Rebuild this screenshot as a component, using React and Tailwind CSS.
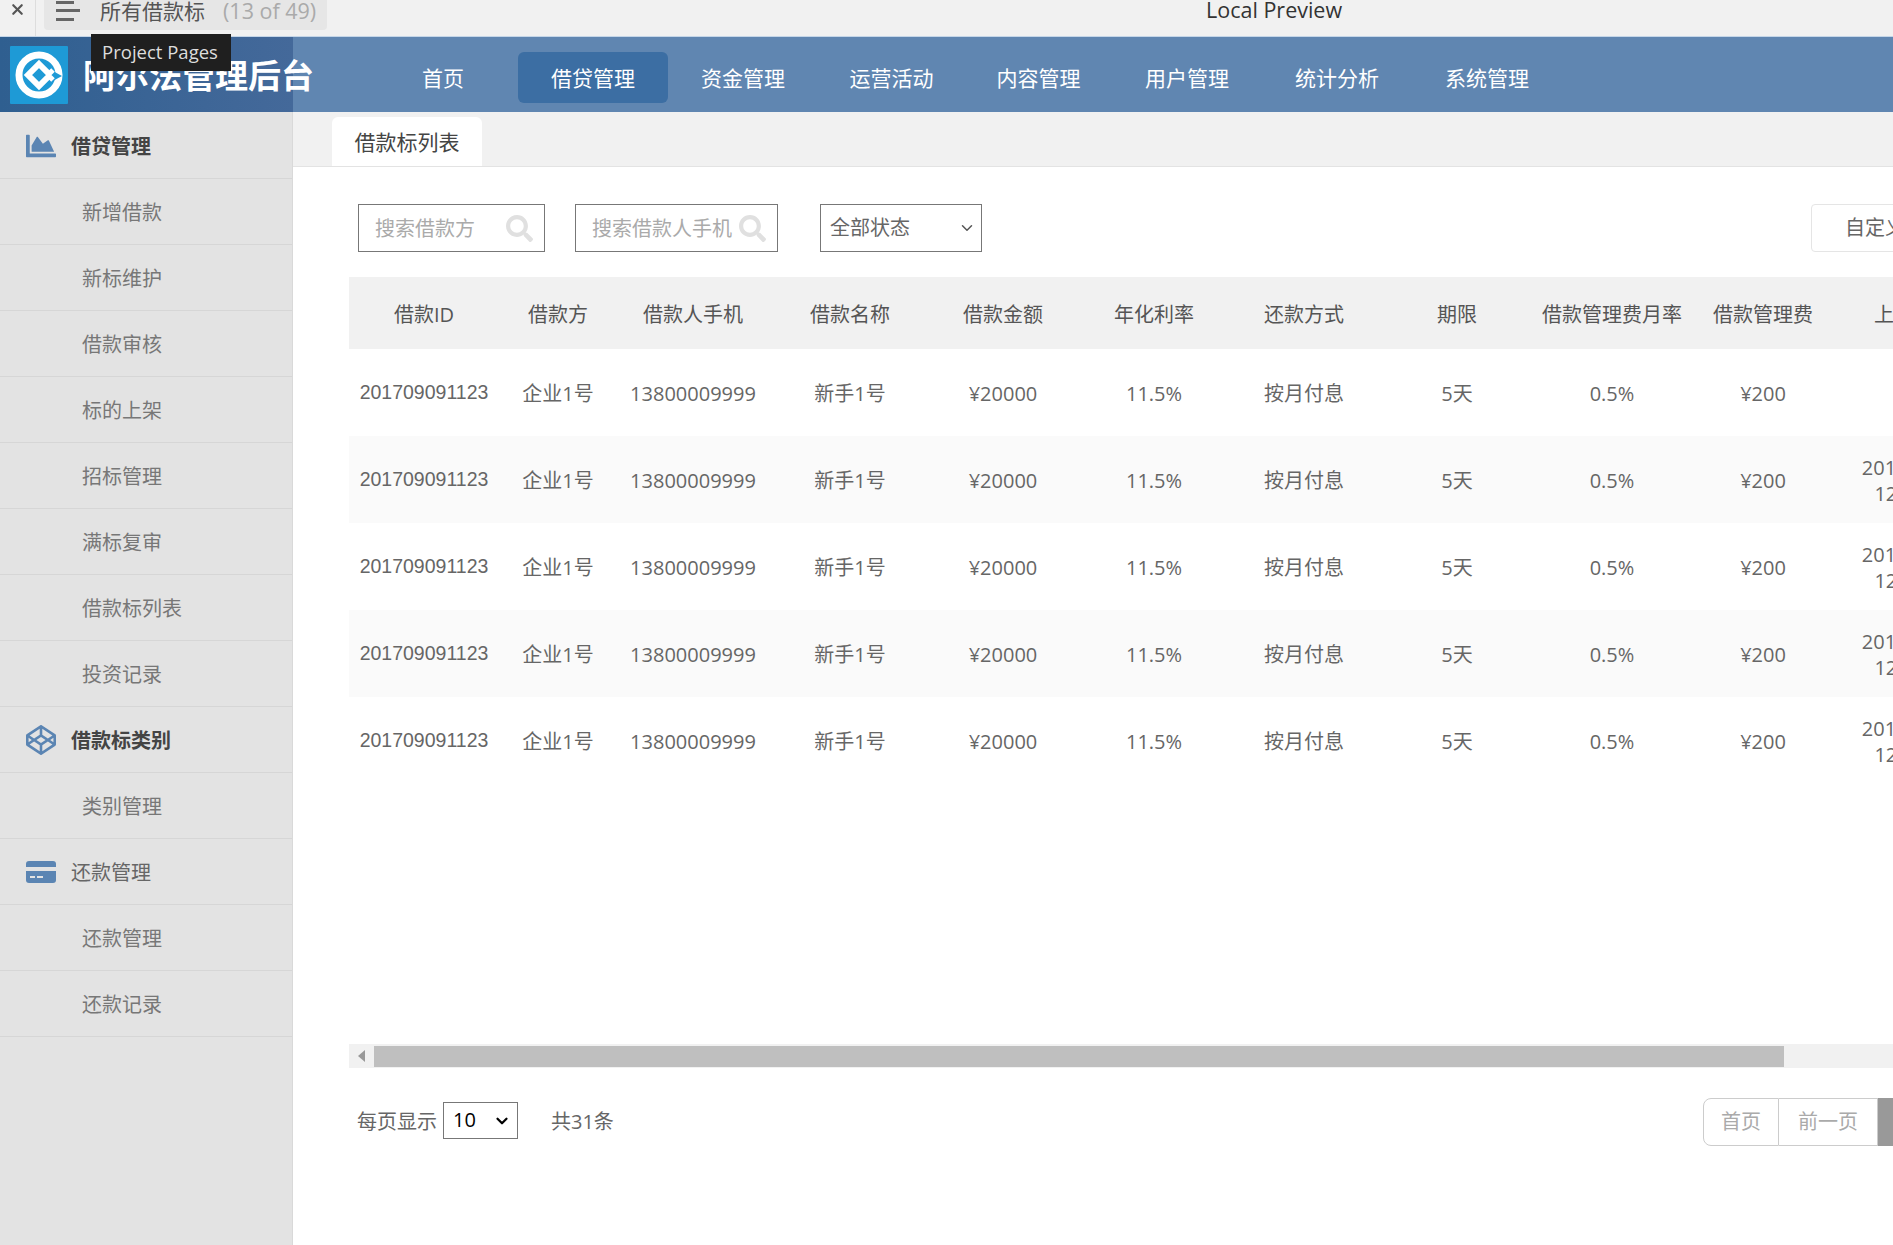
import React from 'react'
import { FaChartArea, FaCodepen, FaSearch } from 'react-icons/fa'
import { ChevronDown, X } from 'lucide-react'

const navItems = [
	{ label: '首页', width: 'w-[150px]' },
	{ label: '借贷管理', width: 'w-[150px]', active: true },
	{ label: '资金管理', width: 'w-[150px]' },
	{ label: '运营活动', width: 'w-[147px]' },
	{ label: '内容管理', width: 'w-[147px]' },
	{ label: '用户管理', width: 'w-[150px]' },
	{ label: '统计分析', width: 'w-[150px]' },
	{ label: '系统管理', width: 'w-[150px]' },
]

function CardIcon({ className }) {
	return (
		<svg viewBox="0 0 30 22" className={className}>
			<path d="M3 0h24a3 3 0 0 1 3 3v3H0V3a3 3 0 0 1 3-3z" fill="currentColor" />
			<path d="M0 10h30v9a3 3 0 0 1-3 3H3a3 3 0 0 1-3-3z" fill="currentColor" />
			<rect x="4" y="15" width="5" height="2" fill="#e3e3e3" />
			<rect x="11" y="15" width="6" height="2" fill="#e3e3e3" />
		</svg>
	)
}

const sideItems = [
	{ label: '借贷管理', icon: FaChartArea, bold: true },
	{ label: '新增借款' },
	{ label: '新标维护' },
	{ label: '借款审核' },
	{ label: '标的上架' },
	{ label: '招标管理' },
	{ label: '满标复审' },
	{ label: '借款标列表' },
	{ label: '投资记录' },
	{ label: '借款标类别', icon: FaCodepen, bold: true },
	{ label: '类别管理' },
	{ label: '还款管理', icon: CardIcon },
	{ label: '还款管理' },
	{ label: '还款记录' },
]

const columns = [
	{ label: '借款ID', width: 'w-[150px]' },
	{ label: '借款方', width: 'w-[118px]' },
	{ label: '借款人手机', width: 'w-[152px]' },
	{ label: '借款名称', width: 'w-[162px]' },
	{ label: '借款金额', width: 'w-[144px]' },
	{ label: '年化利率', width: 'w-[158px]' },
	{ label: '还款方式', width: 'w-[142px]' },
	{ label: '期限', width: 'w-[164px]' },
	{ label: '借款管理费月率', width: 'w-[146px]' },
	{ label: '借款管理费', width: 'w-[156px]' },
	{ label: '上架时间', width: 'w-[146px]' },
]

const rows = [
	{ date: false },
	{ date: true },
	{ date: true },
	{ date: true },
	{ date: true },
]

function Logo() {
	return (
		<svg viewBox="0 0 58 58" className="h-[58px] w-[58px] shrink-0">
			<rect width="58" height="58" rx="1" fill="#1e9ad6" />
			<circle cx="29" cy="29" r="20" fill="none" stroke="#fff" strokeWidth="7" />
			<path d="M29 16 L42 29 L29 42 L16 29 Z" fill="#1e9ad6" />
			<path d="M29 18 L40 29 L29 40 L18 29 Z" fill="none" stroke="#fff" strokeWidth="6" />
			<path d="M41 24 L52 30 L41 36 Z" fill="#1e9ad6" />
			<path d="M38 29 L43 24 M38 29 L43 34" stroke="#fff" strokeWidth="5" />
		</svg>
	)
}

function ListIcon() {
	return (
		<svg viewBox="0 0 24 22" className="h-[22px] w-6 shrink-0 text-[#666]">
			<rect y="0" width="18" height="3" fill="currentColor" />
			<rect y="8" width="24" height="3" fill="currentColor" />
			<rect y="17" width="18" height="3" fill="currentColor" />
		</svg>
	)
}

function SearchBox({ placeholder, className }) {
	return (
		<div className={`relative h-12 border border-[#777] ${className}`}>
			<input
				placeholder={placeholder}
				className="h-full w-full pl-4 text-[20px] outline-none placeholder:text-[#aaa]"
			/>
			<FaSearch className="absolute top-[10px] right-[11px] size-[27px] text-[#e0e0e0]" />
		</div>
	)
}

function App() {
	return (
		<div className="relative flex h-screen w-full flex-col overflow-hidden bg-white font-['Open_Sans','Noto_Sans_CJK_SC',sans-serif] text-[20px] text-[#666]">
			{/* preview window bar */}
			<div className="relative flex h-[37px] shrink-0 items-start border-b border-[#c5d6e8] bg-[#f1f1f1]">
				<div className="flex h-[36px] w-[36px] justify-center border-r border-[#ddd]">
					<X className="mt-[1px] size-[17px] text-[#555]" strokeWidth={3} />
				</div>
				<div className="ml-2 flex h-[30px] w-[283px] items-start rounded-b bg-[#e6e6e6] pl-[12px]">
					<div className="pt-[1px]">
						<ListIcon />
					</div>
					<span className="ml-[20px] text-[21px] leading-[22px] text-[#555]">所有借款标</span>
					<span className="ml-[18px] text-[21.5px] leading-[22px] text-[#aaa]">(13 of 49)</span>
				</div>
				<span className="absolute -top-[2px] left-[1206px] text-[21.5px] leading-[24px] text-[#333]">Local Preview</span>
			</div>

			{/* top nav */}
			<header className="flex h-[75px] shrink-0 items-center bg-[#6086b1]">
				<div className="flex h-full w-[293px] shrink-0 items-center bg-gradient-to-r from-[#2f5f90] to-[#44699a] pl-[10px]">
					<Logo />
					<span className="mt-[2px] ml-[15px] text-[33px] leading-[40px] font-bold whitespace-nowrap text-white">阿尔法管理后台</span>
				</div>
				<nav className="mt-[5px] ml-[75px] flex">
					{navItems.map((item) => (
						<a
							key={item.label}
							className={`flex h-[51px] items-center justify-center rounded-md pt-[3px] text-[21px] text-white ${item.width} ${item.active ? 'bg-[#3c6ea3]' : ''}`}
						>
							{item.label}
						</a>
					))}
				</nav>
			</header>

			<div className="flex min-h-0 flex-1">
				{/* sidebar */}
				<aside className="w-[293px] shrink-0 border-r border-[#d9d9d9] bg-[#e3e3e3] pt-[1px]">
					{sideItems.map((item) => {
						const Icon = item.icon
						return (
							<div
								key={item.label + (Icon ? '-head' : '')}
								className={`flex h-[66px] items-center border-b border-[#d6d6d6] ${Icon ? 'pl-[26px]' : 'pl-[82px]'}`}
							>
								{Icon ? <Icon className="mr-[15px] h-[30px] w-[30px] text-[#5b85b3]" /> : null}
								<span className={`pt-[3px] ${item.bold ? 'font-bold text-[#444]' : Icon ? 'text-[#666]' : 'text-[#777]'}`}>{item.label}</span>
							</div>
						)
					})}
				</aside>

				{/* content */}
				<main className="min-w-0 flex-1">
					<div className="flex h-[55px] items-end border-b border-[#e3e3e3] bg-[#f1f1f1] pl-[39px]">
						<div className="flex h-[49px] w-[150px] items-center justify-center rounded-t-md bg-white pt-[2px] text-[21px] text-[#444]">借款标列表</div>
					</div>

					<div className="flex h-[110px] items-start pt-[37px] pl-[65px]">
						<SearchBox placeholder="搜索借款方" className="w-[187px]" />
						<SearchBox placeholder="搜索借款人手机" className="ml-[30px] w-[203px]" />
						<div className="relative ml-[42px] h-12 w-[162px] border border-[#777]">
							<select className="h-full w-full appearance-none pl-[9px] text-[20px] text-[#666] outline-none">
								<option>全部状态</option>
							</select>
							<ChevronDown className="pointer-events-none absolute top-[14px] right-[5px] size-[18px] text-[#555]" />
						</div>
						<button className="ml-auto h-12 w-[120px] -mr-[38px] rounded border border-[#e5e5e5] pl-[33px] text-left whitespace-nowrap text-[#666]">自定义</button>
					</div>

					<div className="ml-[56px] overflow-hidden">
						<table className="w-[1638px] table-fixed border-collapse">
							<thead>
								<tr className="h-[72px] bg-[#f1f1f1]">
									{columns.map((col) => (
										<th key={col.label} className={`pt-[3px] font-normal text-[#555] ${col.width}`}>{col.label}</th>
									))}
								</tr>
							</thead>
							<tbody>
								{rows.map((row, index) => (
									<tr key={index} className={`h-[87px] text-center [&>td]:pt-[3px] ${index % 2 === 1 ? 'bg-[#fafafa]' : ''}`}>
										<td className="pb-[3px] font-['Liberation_Sans',sans-serif] text-[19.5px]">201709091123</td>
										<td>企业1号</td>
										<td>13800009999</td>
										<td>新手1号</td>
										<td>¥20000</td>
										<td>11.5%</td>
										<td>按月付息</td>
										<td>5天</td>
										<td>0.5%</td>
										<td>¥200</td>
										<td className="leading-[26px]">{row.date ? <>2017-09-09<br />12:00:00</> : null}</td>
									</tr>
								))}
							</tbody>
						</table>
					</div>

					{/* horizontal scroll bar */}
					<div className="mt-[260px] ml-[56px] flex h-6 items-center bg-[#f1f1f1]">
						<div className="flex w-[25px] justify-center">
							<div className="h-0 w-0 border-y-[6px] border-r-[7px] border-y-transparent border-r-[#999]" />
						</div>
						<div className="h-[21px] w-[1410px] bg-[#bfbfbf]" />
					</div>

					{/* pagination */}
					<div className="mt-[30px] flex h-12 items-center pl-[64px]">
						<span>每页显示</span>
						<div className="relative mb-[4px] ml-[6px] h-[37px] w-[75px] border border-[#777]">
							<select className="h-full w-full appearance-none pl-[9px] text-[20px] text-black outline-none">
								<option>10</option>
							</select>
							<ChevronDown className="pointer-events-none absolute top-[9px] right-[6px] size-[18px] text-black" strokeWidth={3} />
						</div>
						<span className="ml-[33px]">共31条</span>
						<div className="ml-auto -mr-[40px] flex h-12 text-[#aaa]">
							<button className="w-[76px] rounded-l-lg border border-[#ccc]">首页</button>
							<button className="w-[99px] border-y border-r border-[#ccc]">前一页</button>
							<div className="w-[55px] bg-[#999]" />
						</div>
					</div>
				</main>
			</div>

			{/* tooltip over the logo */}
			<div className="absolute top-[34px] left-[91px] flex h-[37px] w-[140px] items-center justify-center bg-[#1f1f1f] pb-[2px] pr-[2px] text-[18.5px] text-[#ddd]">Project Pages</div>
		</div>
	)
}

export default App
